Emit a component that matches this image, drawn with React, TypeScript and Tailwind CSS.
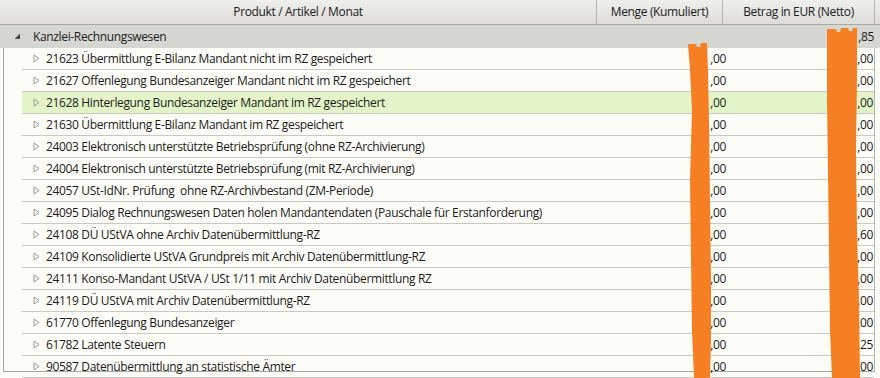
const rows = [
  { label: '21623 Übermittlung E-Bilanz Mandant nicht im RZ gespeichert', betrag: ',00' },
  { label: '21627 Offenlegung Bundesanzeiger Mandant nicht im RZ gespeichert', betrag: ',00' },
  { label: '21628 Hinterlegung Bundesanzeiger Mandant im RZ gespeichert', betrag: ',00', selected: true },
  { label: '21630 Übermittlung E-Bilanz Mandant im RZ gespeichert', betrag: ',00' },
  { label: '24003 Elektronisch unterstützte Betriebsprüfung (ohne RZ-Archivierung)', betrag: ',00' },
  { label: '24004 Elektronisch unterstützte Betriebsprüfung (mit RZ-Archivierung)', betrag: ',00' },
  { label: '24057 USt-IdNr. Prüfung  ohne RZ-Archivbestand (ZM-Periode)', betrag: ',00' },
  { label: '24095 Dialog Rechnungswesen Daten holen Mandantendaten (Pauschale für Erstanforderung)', betrag: ',00' },
  { label: '24108 DÜ UStVA ohne Archiv Datenübermittlung-RZ', betrag: ',60' },
  { label: '24109 Konsolidierte UStVA Grundpreis mit Archiv Datenübermittlung-RZ', betrag: ',00' },
  { label: '24111 Konso-Mandant UStVA / USt 1/11 mit Archiv Datenübermittlung RZ', betrag: ',00' },
  { label: '24119 DÜ UStVA mit Archiv Datenübermittlung-RZ', betrag: ',00' },
  { label: '61770 Offenlegung Bundesanzeiger', betrag: ',00' },
  { label: '61782 Latente Steuern', betrag: ',25' },
  { label: '90587 Datenübermittlung an statistische Ämter', betrag: ',00' },
]

function Expander() {
  return (
    <svg width="7" height="9" viewBox="0 0 7 9" className="shrink-0">
      <path d="M1 1 L6 4.5 L1 8 Z" fill="none" stroke="#9a9a9a" strokeWidth="1" />
    </svg>
  )
}

// orange marker strokes that hide the leading digits
function Redactions() {
  return (
    <svg width="880" height="378" className="absolute inset-0 pointer-events-none">
      <path
        d="M688 44 L696 44 L697 47 L700 47 L701 43 L707 43 L708 70 L709 120 L710 200 L711 280 L711 340 L710 378 L694 378 L692 330 L691 260 L690 180 L692 110 L690 70 Z"
        fill="#f57f22"
      />
      <path
        d="M827 29 L836 29 L837 32 L840 32 L841 28 L848 28 L849 31 L852 31 L853 28 L857 28 L857 80 L856 150 L857 230 L859 300 L860 378 L832 378 L830 330 L829 250 L828 170 L827 100 Z"
        fill="#f57f22"
      />
    </svg>
  )
}

export default function App() {
  return (
    <div
      className="relative w-[880px] h-[378px] overflow-hidden bg-[#fdfdf7] text-[12px] tracking-[-0.35px] text-[#1b1b1b]"
      style={{ fontFamily: '"Open Sans", "Noto Sans", sans-serif' }}
    >
      {/* header */}
      <div className="flex h-[25px] bg-gradient-to-b from-[#efefec] to-[#dddcd8] border-b border-[#a9a9a5]">
        <div className="w-[597px] flex items-center justify-center border-r border-[#b3b3ae]">
          Produkt / Artikel / Monat
        </div>
        <div className="w-[126px] flex items-center justify-center border-r border-[#b3b3ae]">
          Menge (Kumuliert)
        </div>
        <div className="w-[152px] flex items-center justify-center border-r border-[#b3b3ae]">
          Betrag in EUR (Netto)
        </div>
        <div className="flex-1" />
      </div>

      {/* group row */}
      <div className="flex h-[23px] bg-[#d6d7d1] items-center">
        <div className="w-[33px] flex justify-center pl-[2px]">
          <svg width="7" height="7" viewBox="0 0 7 7">
            <path d="M6 0.5 L6 6 L0.5 6 Z" fill="#4a4a4a" />
          </svg>
        </div>
        <div className="w-[564px]">Kanzlei-Rechnungswesen</div>
        <div className="w-[126px]" />
        <div className="w-[151px] text-right">,85</div>
      </div>

      {/* body */}
      <div className="flex h-[324px] ml-[3px] w-[872px] border-l border-b border-[#a7a7a2]">
        <div className="w-[18px] shrink-0" />
        <div className="flex-1 border-r border-[#b8b8b3]">
          {rows.map((r) => (
            <div
              key={r.label}
              className={`flex h-[22px] shrink-0 items-center border-b border-[#c9c9c2] ${
                r.selected ? 'bg-[#e3f5c8]' : ''
              }`}
            >
              <div className="w-[577px] flex items-center gap-[6px] pl-[11px] whitespace-pre">
                <Expander />
                <span>{r.label}</span>
              </div>
              <div className="w-[127px] text-right">,00</div>
              <div className="flex-1 text-right pr-[1px]">{r.betrag}</div>
            </div>
          ))}
        </div>
      </div>

      <Redactions />
    </div>
  )
}
